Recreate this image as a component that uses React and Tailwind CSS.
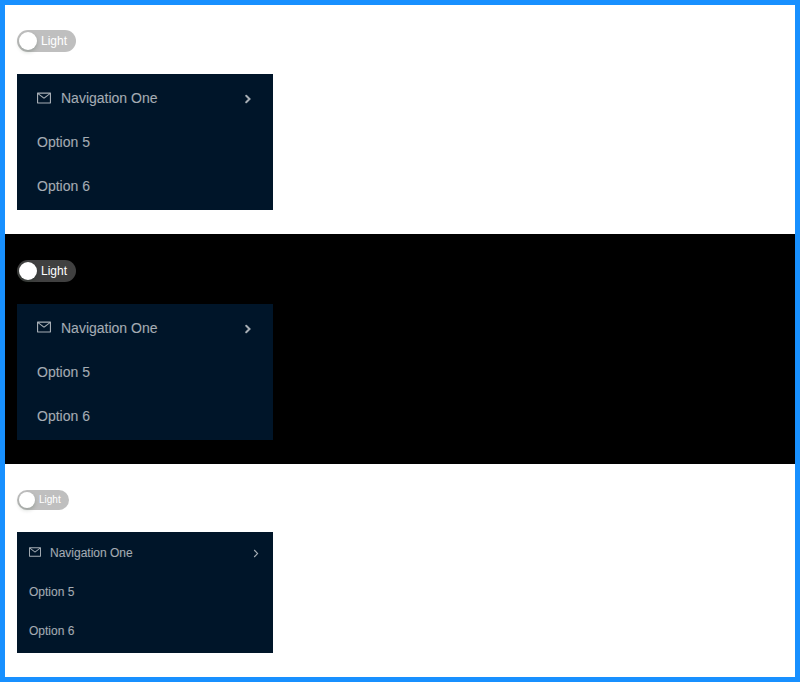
import React from "react";
import { AiOutlineMail } from "react-icons/ai";

function Toggle({ small, dark }) {
  return (
    <button
      className={`flex items-center gap-1 rounded-full pl-0.5 text-white ${
        small ? "h-5 w-[52px] text-[10px]" : "h-[22px] w-[59px] text-xs"
      } ${dark ? "bg-[#404040]" : "bg-[#bfbfbf]"}`}
    >
      <span
        className={`rounded-full bg-white shadow-[0_2px_4px_0_rgba(0,35,11,0.2)] ${
          small ? "size-4" : "size-[18px]"
        }`}
      />
      <span className={small ? "leading-5" : "leading-[22px]"}>Light</span>
    </button>
  );
}

function Arrow({ small }) {
  return (
    <svg
      viewBox="0 0 10 10"
      fill="none"
      stroke="currentColor"
      strokeWidth={small ? 1.1 : 2}
      strokeLinecap={small ? "butt" : "round"}
      className={`ml-auto size-[10px] ${small ? "mr-3" : "mr-5 mt-0.5"}`}
    >
      <path d={small ? "M3.2 2l3.4 3.5l-3.4 3.5" : "M3.2 1.8l3.3 3.2l-3.3 3.2"} />
    </svg>
  );
}

function Menu({ small, dark }) {
  const item = small ? "flex h-[35px] items-center pb-px pl-3" : "flex h-10 items-center pl-5";
  const icon = small ? "mb-0.5 mr-[9px] size-3" : dark ? "mb-0.5 mr-2.5 size-3.5" : "mr-2.5 size-3.5";
  return (
    <ul
      className={`flex w-64 flex-col gap-1 bg-[#001529] py-1 text-white/65 ${
        small ? "text-xs" : "text-sm"
      }`}
    >
      <li className={item}>
        <AiOutlineMail viewBox="64 64 896 896" className={icon} />
        <span>Navigation One</span>
        <Arrow small={small} />
      </li>
      <li className={item}>Option 5</li>
      <li className={item}>Option 6</li>
    </ul>
  );
}

export default function App() {
  return (
    <div className="flex h-[682px] w-[800px] flex-col border-[5px] border-[#1890ff] bg-white font-['Liberation_Sans',Arial,sans-serif]">
      <section className="flex h-[229px] flex-col items-start gap-[22px] px-3 pt-[25px]">
        <Toggle />
        <Menu />
      </section>
      <section className="flex h-[230px] flex-col items-start gap-[22px] bg-black px-3 pt-[26px]">
        <Toggle dark />
        <Menu dark />
      </section>
      <section className="flex h-[213px] flex-col items-start gap-[22px] px-3 pt-[26px]">
        <Toggle small />
        <Menu small />
      </section>
    </div>
  );
}
